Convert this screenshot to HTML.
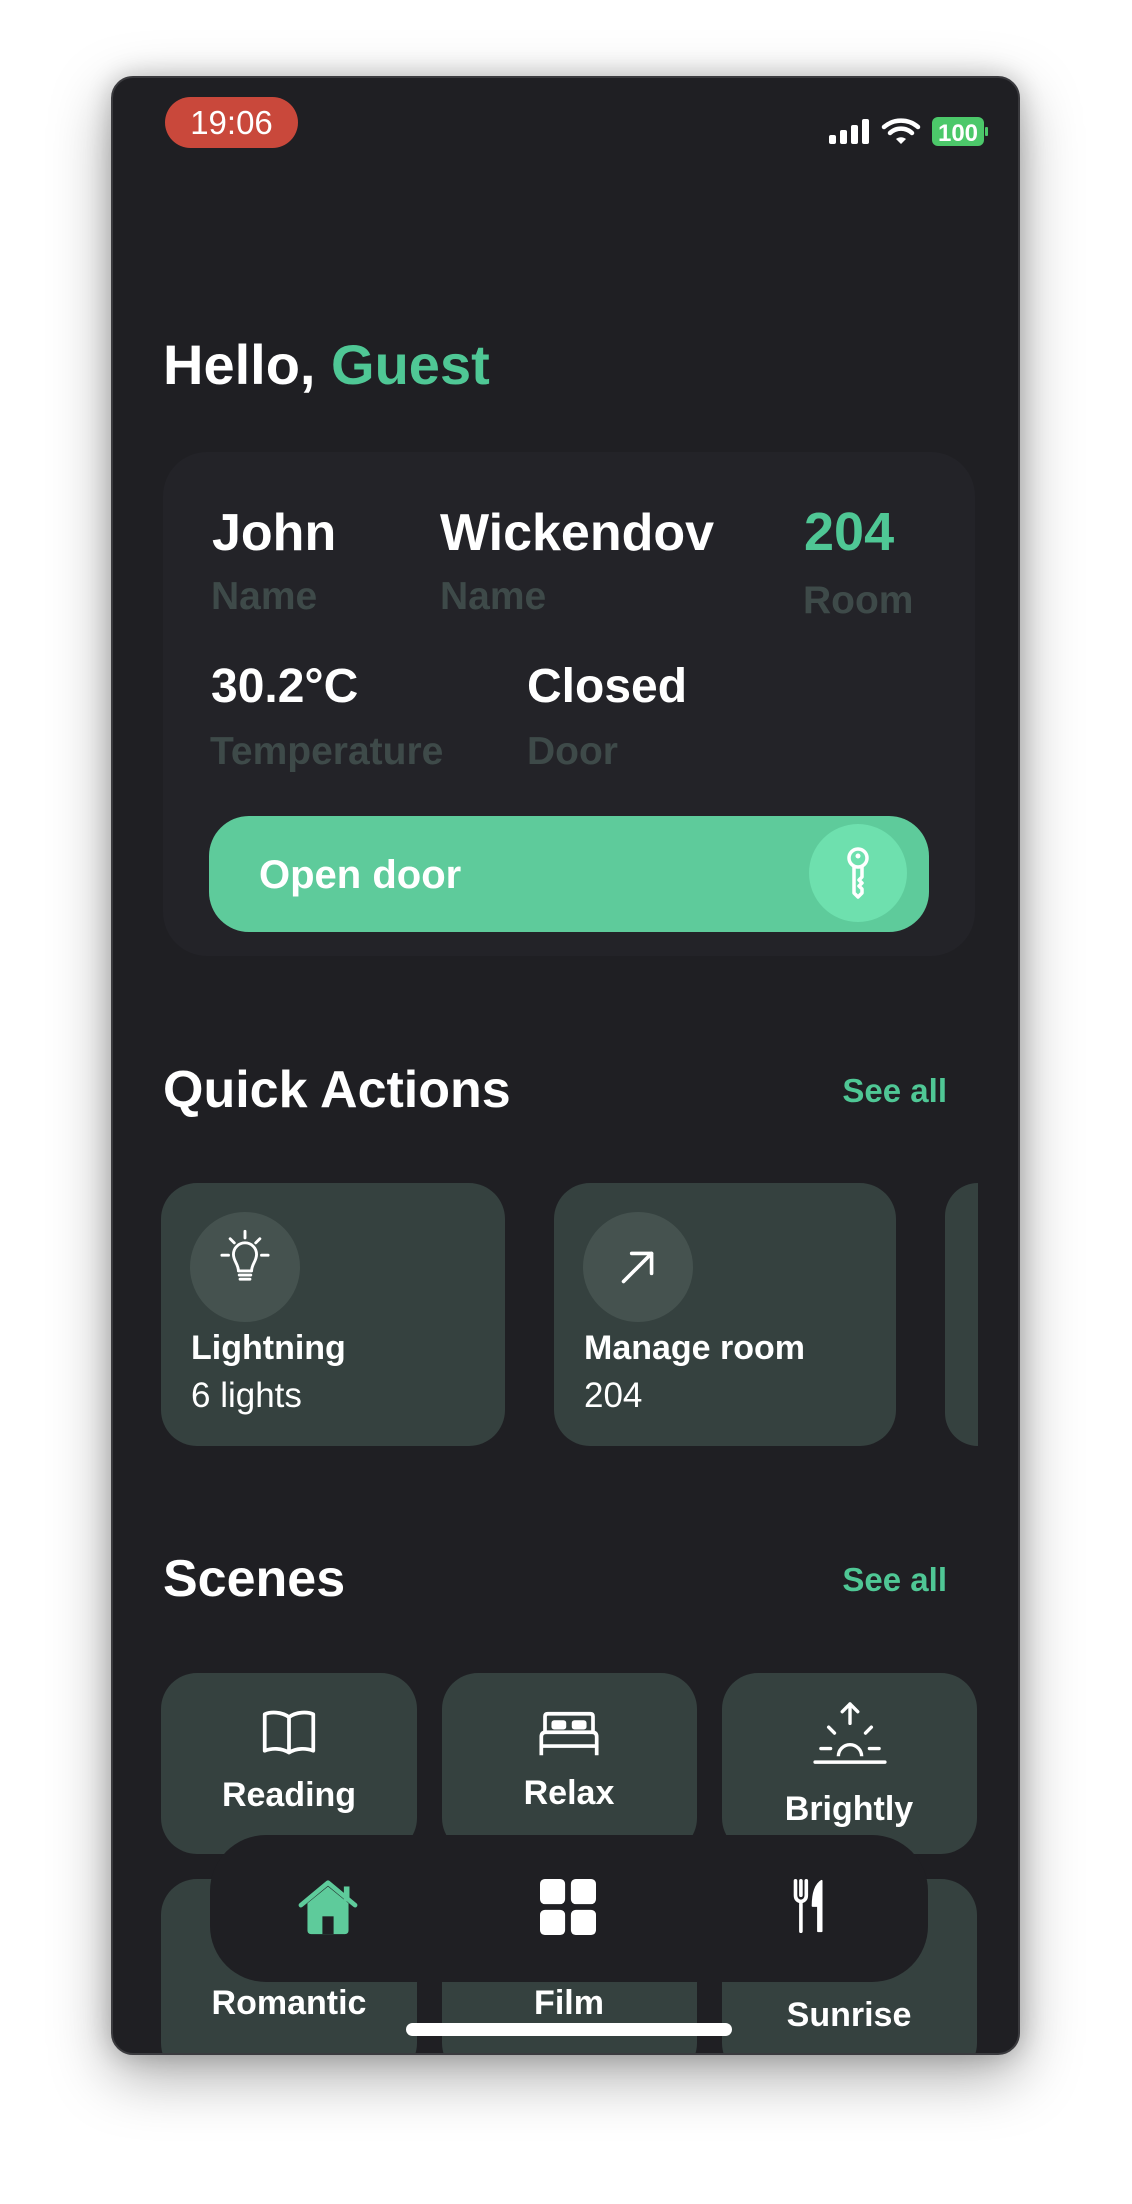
<!DOCTYPE html>
<html><head><meta charset="utf-8"><style>
*{margin:0;padding:0;box-sizing:border-box}
body{width:1132px;height:2204px;background:#fff;position:relative;overflow:hidden;font-family:"Liberation Sans",sans-serif}
.phone{position:absolute;left:111px;top:76px;width:909px;height:1979px;border-radius:22px;background:#1f1f23;overflow:hidden;border:2px solid #3a3a3e;box-shadow:0 20px 60px rgba(0,0,0,.35),0 0 25px rgba(0,0,0,.2)}
.in{position:absolute;left:-113px;top:-78px;width:1132px;height:2204px}
.a{position:absolute;line-height:1;white-space:nowrap}
.w{color:#fff;font-weight:bold}
.lbl{color:#3e4a49;font-weight:bold;font-size:39px}
.g{color:#4fc795}
.card{position:absolute;background:#35413f;border-radius:36px}
.c{text-align:center;transform:translateX(-50%)}
</style></head><body>
<div class="phone"><div class="in">
<div class="a" style="left:165px;top:97px;width:133px;height:51px;border-radius:26px;background:#c9483b"></div>
<div class="a" style="left:165px;top:106px;width:133px;text-align:center;color:#fff;font-size:33px">19:06</div>
<svg class="a" style="left:828px;top:116px" width="165" height="32" viewBox="0 0 165 32">
<rect x="1" y="19" width="7" height="9" rx="2" fill="#fff"/><rect x="12" y="14" width="7" height="14" rx="2" fill="#fff"/><rect x="23" y="9" width="7" height="19" rx="2" fill="#fff"/><rect x="34" y="3" width="7" height="25" rx="2" fill="#fff"/>
<path d="M56 11 A26 26 0 0 1 90 11" stroke="#fff" stroke-width="4.5" fill="none" stroke-linecap="round"/><path d="M62 17 A16 16 0 0 1 84 17" stroke="#fff" stroke-width="4.5" fill="none" stroke-linecap="round"/><path d="M68 23 L73 28 L78 23 A8 8 0 0 0 68 23Z" fill="#fff"/>
<rect x="104" y="1" width="52" height="29" rx="6" fill="#4cc86a"/><rect x="157" y="11" width="3" height="9" rx="1" fill="#4cc86a"/>
<text x="130" y="25" text-anchor="middle" fill="#fff" font-family="Liberation Sans" font-weight="bold" font-size="24">100</text></svg>

<div class="a w" style="left:163px;top:337px;font-size:56px">Hello, <span class="g">Guest</span></div>

<div class="a" style="left:163px;top:452px;width:812px;height:504px;border-radius:44px;background:#232328"></div>
<div class="a w" style="left:212px;top:507px;font-size:52px">John</div>
<div class="a w" style="left:440px;top:507px;font-size:52px">Wickendov</div>
<div class="a g" style="left:804px;top:505px;font-size:54px;font-weight:bold">204</div>
<div class="a lbl" style="left:211px;top:577px">Name</div>
<div class="a lbl" style="left:440px;top:577px">Name</div>
<div class="a lbl" style="left:803px;top:581px">Room</div>
<div class="a w" style="left:211px;top:663px;font-size:48px">30.2°C</div>
<div class="a w" style="left:527px;top:663px;font-size:48px">Closed</div>
<div class="a lbl" style="left:210px;top:732px">Temperature</div>
<div class="a lbl" style="left:527px;top:732px">Door</div>

<div class="a" style="left:209px;top:816px;width:720px;height:116px;border-radius:40px;background:#5ecb9b"></div>
<div class="a" style="left:259px;top:855px;font-size:40px;color:#fff;font-weight:bold">Open door</div>
<div class="a" style="left:809px;top:824px;width:98px;height:98px;border-radius:50%;background:#6ee0ae"></div>
<svg class="a" style="left:838px;top:845px" width="40" height="56" viewBox="0 0 40 56"><circle cx="20" cy="13" r="9" fill="none" stroke="#fff" stroke-width="3.5"/><circle cx="20" cy="11" r="2.5" fill="#fff"/><path d="M16 22 V48 L20 52 L24 48 V44 L21 41 L24 38 L21 35 L24 32 V22" fill="none" stroke="#fff" stroke-width="3.5" stroke-linejoin="round"/></svg>

<div class="a w" style="left:163px;top:1064px;font-size:52px">Quick Actions</div>
<div class="a g" style="right:185px;top:1074px;font-size:33px;font-weight:bold">See all</div>

<div class="card" style="left:161px;top:1183px;width:344px;height:263px"></div>
<div class="card" style="left:554px;top:1183px;width:342px;height:263px"></div>
<div class="card" style="left:945px;top:1183px;width:33px;height:263px;border-radius:36px 0 0 36px"></div>
<div class="a" style="left:190px;top:1212px;width:110px;height:110px;border-radius:50%;background:#45524f"></div>
<div class="a" style="left:583px;top:1212px;width:110px;height:110px;border-radius:50%;background:#45524f"></div>
<svg class="a" style="left:220px;top:1228px" width="50" height="66" viewBox="0 0 60 80"><path d="M30 4 V12 M12 13 L17 18 M48 13 L43 18 M2 33 H10 M50 33 H58" stroke="#fff" stroke-width="3.5" stroke-linecap="round"/><path d="M22 52 C22 44 16 40 16 32 A14 14 0 0 1 44 32 C44 40 38 44 38 52 Z" fill="none" stroke="#fff" stroke-width="3.5" stroke-linejoin="round"/><path d="M23 57 H37 M24 62 H36" stroke="#fff" stroke-width="3.5" stroke-linecap="round"/></svg>
<svg class="a" style="left:619px;top:1248px" width="38" height="38" viewBox="0 0 42 42"><path d="M5 37 L36 6 M14 6 H36 V28" stroke="#fff" stroke-width="4" fill="none" stroke-linecap="round" stroke-linejoin="round"/></svg>
<div class="a w" style="left:191px;top:1331px;font-size:34px">Lightning</div>
<div class="a" style="left:191px;top:1378px;font-size:35px;color:#fff">6 lights</div>
<div class="a w" style="left:584px;top:1331px;font-size:34px">Manage room</div>
<div class="a" style="left:584px;top:1378px;font-size:35px;color:#fff">204</div>

<div class="a w" style="left:163px;top:1553px;font-size:52px">Scenes</div>
<div class="a g" style="right:185px;top:1563px;font-size:33px;font-weight:bold">See all</div>

<div class="card" style="left:161px;top:1673px;width:256px;height:181px"></div>
<div class="card" style="left:442px;top:1673px;width:255px;height:181px"></div>
<div class="card" style="left:722px;top:1673px;width:255px;height:181px"></div>
<div class="card" style="left:161px;top:1879px;width:256px;height:200px"></div>
<div class="card" style="left:442px;top:1879px;width:255px;height:200px"></div>
<div class="card" style="left:722px;top:1879px;width:255px;height:200px"></div>

<svg class="a" style="left:261px;top:1709px" width="56" height="48" viewBox="0 0 60 50"><path d="M30 8 C22 2 10 2 4 5 V44 C12 41 22 41 30 46 C38 41 48 41 56 44 V5 C50 2 38 2 30 8 Z M30 8 V46" fill="none" stroke="#fff" stroke-width="4" stroke-linejoin="round"/></svg>
<svg class="a" style="left:536px;top:1711px" width="66" height="48" viewBox="0 0 68 52"><path d="M8 22 V6 Q8 3 11 3 H57 Q60 3 60 6 V22" fill="none" stroke="#fff" stroke-width="4"/><rect x="15" y="10" width="16" height="10" rx="3" fill="#fff"/><rect x="37" y="10" width="16" height="10" rx="3" fill="#fff"/><path d="M4 48 V28 Q4 23 9 23 H59 Q64 23 64 28 V48 M4 38 H64" fill="none" stroke="#fff" stroke-width="4"/></svg>
<svg class="a" style="left:812px;top:1702px" width="76" height="64" viewBox="0 0 76 66"><path d="M38 2 V22 M30 10 L38 2 L46 10 M16 26 L22 32 M60 26 L54 32 M8 48 H18 M58 48 H68 M2 62 H74" stroke="#fff" stroke-width="3.5" fill="none" stroke-linecap="round" stroke-linejoin="round"/><path d="M26 56 A12 12 0 0 1 50 56" fill="none" stroke="#fff" stroke-width="3.5"/></svg>

<div class="a w c" style="left:289px;top:1778px;font-size:34px">Reading</div>
<div class="a w c" style="left:569px;top:1776px;font-size:34px">Relax</div>
<div class="a w c" style="left:849px;top:1792px;font-size:34px">Brightly</div>
<div class="a w c" style="left:289px;top:1986px;font-size:34px">Romantic</div>
<div class="a w c" style="left:569px;top:1986px;font-size:34px">Film</div>
<div class="a w c" style="left:849px;top:1998px;font-size:34px">Sunrise</div>

<div class="a" style="left:210px;top:1835px;width:718px;height:147px;border-radius:56px;background:#1f1f23"></div>
<svg class="a" style="left:296px;top:1879px" width="64" height="56" viewBox="0 0 66 60"><path d="M4 28 L33 4 L62 28" fill="none" stroke="#5ecb9b" stroke-width="5" stroke-linecap="round" stroke-linejoin="round"/><path d="M11 26 L33 8 L55 26 V55 Q55 59 51 59 H15 Q11 59 11 55 Z" fill="#5ecb9b"/><rect x="27" y="40" width="12" height="19" fill="#1f1f23"/><rect x="50" y="8" width="6" height="16" fill="#5ecb9b"/></svg>
<svg class="a" style="left:540px;top:1879px" width="56" height="56" viewBox="0 0 58 58"><rect x="0" y="0" width="26" height="26" rx="5" fill="#fff"/><rect x="32" y="0" width="26" height="26" rx="5" fill="#fff"/><rect x="0" y="32" width="26" height="26" rx="5" fill="#fff"/><rect x="32" y="32" width="26" height="26" rx="5" fill="#fff"/></svg>
<svg class="a" style="left:792px;top:1879px" width="34" height="54" viewBox="0 0 36 60"><path d="M3 2 V18 Q3 24 9 25 V58 M9 2 V18 M15 2 V18 Q15 24 9 25" stroke="#fff" stroke-width="4" fill="none" stroke-linecap="round"/><path d="M32 2 Q22 8 22 30 H28 V58 H32 Z" fill="#fff" stroke="#fff" stroke-width="2" stroke-linejoin="round"/></svg>

<div class="a" style="left:406px;top:2023px;width:326px;height:13px;border-radius:7px;background:#fff"></div>
</div></div>
</body></html>
